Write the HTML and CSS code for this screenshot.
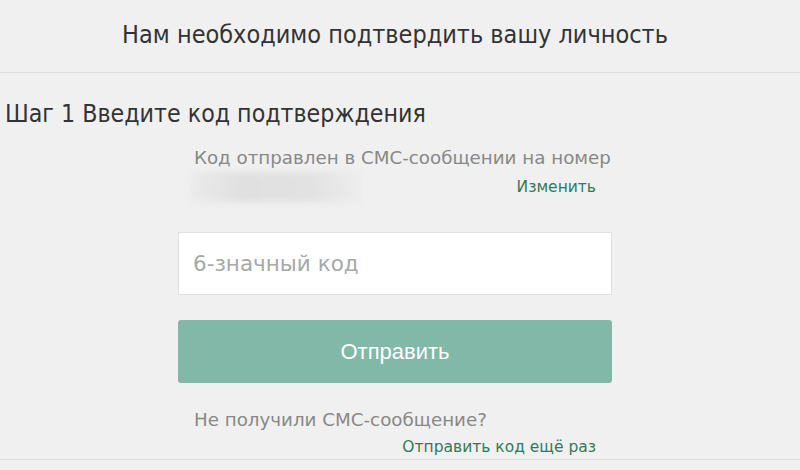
FILE: index.html
```html
<!DOCTYPE html>
<html lang="ru">
<head>
  <meta charset="UTF-8" />
  <title>Подтверждение личности</title>
  <link rel="stylesheet" href="styles.css">
</head>
<body>

<div class="page-title">Нам необходимо подтвердить вашу личность</div>

<div class="step">
  <h2>Шаг 1 Введите код подтверждения</h2>

  <div class="verify">
    <p class="hint">Код отправлен в СМС-сообщении на номер</p>
    <div class="phone-row">
      <span class="phone-blur"></span>
      <a href="#" class="link">Изменить</a>
    </div>

    <!-- code form -->
    <form class="code-form" onsubmit="return false">
      <input type="text" class="code-input" placeholder="6-значный код" />
      <button type="submit" class="send-btn">Отправить</button>
    </form>

    <p class="hint">Не получили СМС-сообщение?</p>
    <div class="resend-row">
      <a href="#" class="link">Отправить код ещё раз</a>
    </div>
  </div>
</div>

</body>
</html>
```

FILE: styles.css
```css
body {
  margin: 0;
  background-color: #f0f0f0;
  font-family: 'DejaVu Sans', Verdana, sans-serif;
  color: #333;
}

.page-title {
  height: 72px;
  line-height: 70px;
  padding-right: 10px;
  text-align: center;
  font-family: 'DejaVu Sans Condensed', 'DejaVu Sans', sans-serif;
  font-size: 25px;
  color: #333;
  border-bottom: 1px solid #dcdcdc;
}

.step {
  border-bottom: 1px solid #dcdcdc;
}

.step h2 {
  margin: 0;
  padding: 26px 0 0 5px;
  font-family: 'DejaVu Sans Condensed', 'DejaVu Sans', sans-serif;
  font-weight: normal;
  font-size: 24.7px;
  line-height: 30px;
  color: #333;
}

/* form column */
.verify {
  width: 434px;
  margin-left: 178px;
  padding-top: 17px;
}

.hint {
  margin: 0;
  padding-left: 16px;
  font-size: 18.25px;
  line-height: 24px;
  color: #888;
}

.phone-row {
  display: flex;
  justify-content: space-between;
  align-items: center;
  padding: 0 16px 0 12px;
  height: 34px;
}

.phone-blur {
  width: 172px;
  height: 30px;
  background: linear-gradient(90deg, #ebebeb, #e0e0e0 30%, #e2e2e2 70%, #ededed);
  filter: blur(3px);
}

.link {
  font-size: 15.5px;
  line-height: 18px;
  color: #2f7a5c;
  text-decoration: none;
}

.code-form {
  display: flex;
  flex-direction: column;
  gap: 25px;
  margin: 28px 0 25px;
}

.code-input {
  height: 63px;
  box-sizing: border-box;
  border: 1px solid #dfdfdf;
  background: #fff;
  padding: 0 14px;
  font-family: 'DejaVu Sans', Verdana, sans-serif;
  font-size: 21.5px;
  color: #333;
  outline: none;
}

.code-input::placeholder {
  color: #a8a8a8;
}

.send-btn {
  height: 63px;
  border: none;
  border-radius: 3px;
  background-color: #81b8a8;
  color: #fff;
  font-family: 'Liberation Sans', Arial, sans-serif;
  font-size: 22px;
  cursor: pointer;
}

.resend-row {
  display: flex;
  justify-content: flex-end;
  padding: 6px 16px 0 0;
  height: 21px;
}
```
